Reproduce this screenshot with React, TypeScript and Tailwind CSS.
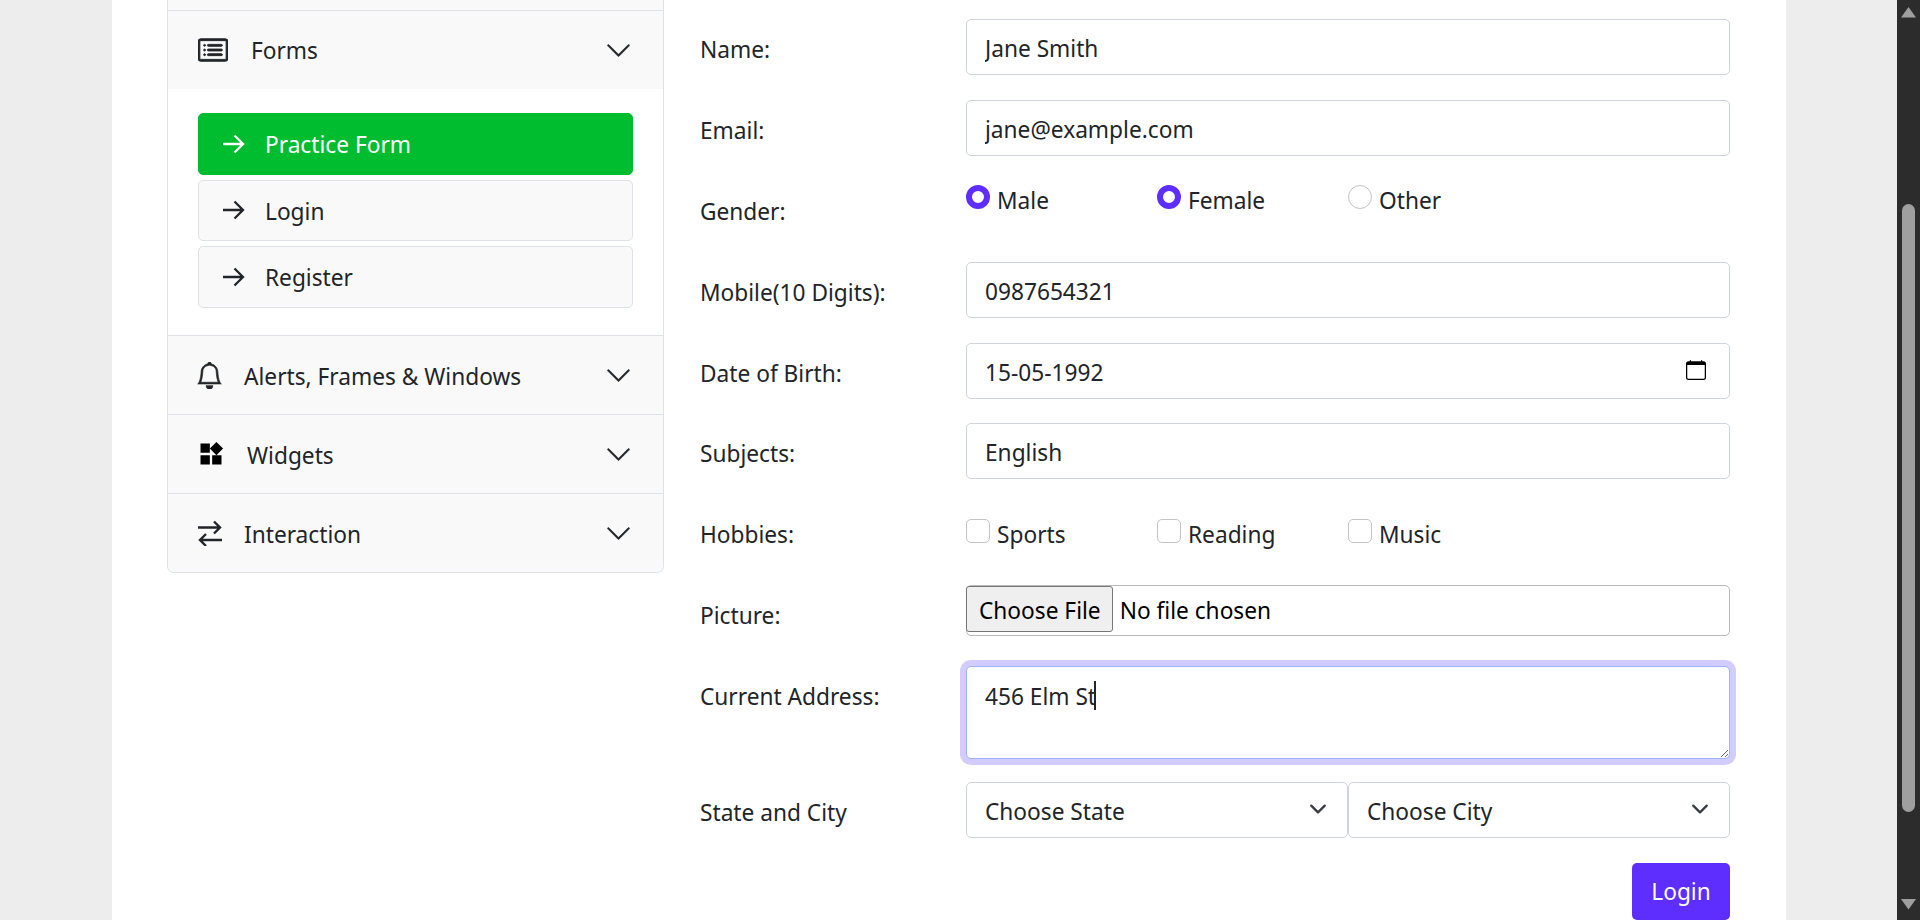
import React from 'react';
import { BsBell, BsCalendar, BsCardList, BsChevronDown } from 'react-icons/bs';
import { MdWidgets } from 'react-icons/md';

const inputClass =
  'w-full h-[56px] pl-[18px] pr-[19px] pt-[2px] bg-white border border-[#ced4da] rounded-[5px] text-[#212529] outline-none';

const Field: React.FC<{ label: string; labelTop?: string; className?: string; children: React.ReactNode }> = ({
  label,
  labelTop = 'pt-[14px]',
  className = 'mb-[25px]',
  children,
}) => (
  <div className={`flex ${className}`}>
    <label className={`w-[266px] shrink-0 ${labelTop}`}>{label}</label>
    <div className="flex-1 min-w-0">{children}</div>
  </div>
);

const Radio: React.FC<{ label: string; checked?: boolean }> = ({ label, checked }) => (
  <label className="flex w-[191px] items-start gap-[7px]">
    <input
      type="radio"
      readOnly
      checked={!!checked}
      className={`appearance-none w-[24px] h-[24px] mt-[4px] rounded-full ${
        checked ? 'border-[6px] border-[#5e2dff] bg-white' : 'border border-[#c4c4c4] bg-white'
      }`}
    />
    <span className="pt-[3px]">{label}</span>
  </label>
);

const Check: React.FC<{ label: string }> = ({ label }) => (
  <label className="flex w-[191px] items-start gap-[7px]">
    <input type="checkbox" readOnly className="appearance-none w-[24px] h-[24px] mt-[15px] rounded-[5px] border border-[#c4c4c4] bg-white" />
    <span className="pt-[14px]">{label}</span>
  </label>
);

const ArrowIcon = () => (
  <svg width="22" height="20" viewBox="0 0 22 20" fill="none" stroke="currentColor" strokeWidth="2.3" className="mr-[20px] shrink-0">
    <path d="M0 10H20M11.5 1.5 20 10l-8.500 8.500" />
  </svg>
);

const SubItem: React.FC<{ label: string; active?: boolean }> = ({ label, active }) => (
  <a
    className={`flex items-center h-[61.5px] pl-[24px] rounded-[5px] border ${
      active ? 'bg-[#00bd2f] border-[#00bd2f] text-white' : 'bg-[#f9f9f9] border-[#dee2e6]'
    }`}
  >
    <ArrowIcon />
    <span className="pt-[3px]">{label}</span>
  </a>
);

const SwapIcon = () => (
  <svg width="24" height="26" viewBox="0 0 24 26" fill="none" stroke="#212529" strokeWidth="2.4" className="shrink-0">
    <path d="M0 7.500H22M16 1.500l6 6-6 6" />
    <path d="M24 20H2M8 14l-6 6 6 6" />
  </svg>
);

const Section: React.FC<{ icon: React.ReactNode; label: string; gap: string }> = ({ icon, label, gap }) => (
  <div className="flex items-center h-[79px] pl-[30px] pr-[31px] bg-[#f9f9f9] border-t border-[#dee2e6]">
    {icon}
    <span className={`${gap} pt-[5px]`}>{label}</span>
    <BsChevronDown size={27} className="ml-auto stroke-[0.3px] stroke-current" />
  </div>
);

const Sidebar = () => (
  <aside className="w-[497px] shrink-0 self-start bg-white border-x border-b border-[#dee2e6] rounded-b-[7px] overflow-hidden">
    <div className="h-[10px] bg-[#f9f9f9]" />
    <div className="flex items-center h-[79px] pl-[30px] pr-[31px] bg-[#f9f9f9] border-t border-[#dee2e6]">
      <BsCardList size={30} className="stroke-[0.5px] stroke-current" />
      <span className="ml-[23px] pt-[2px]">Forms</span>
      <BsChevronDown size={27} className="ml-auto stroke-[0.3px] stroke-current" />
    </div>
    <div className="flex flex-col gap-[5px] pt-[24px] pb-[27.5px] px-[30px]">
      <SubItem label="Practice Form" active />
      <SubItem label="Login" />
      <SubItem label="Register" />
    </div>
    <Section icon={<BsBell size={27} className="-ml-[2px] stroke-[0.4px] stroke-current" />} label="Alerts, Frames & Windows" gap="ml-[21px]" />
    <Section icon={<MdWidgets size={28} className="text-black -ml-[1px]" />} label="Widgets" gap="ml-[22px]" />
    <Section icon={<SwapIcon />} label="Interaction" gap="ml-[22px]" />
  </aside>
);

const PracticeForm = () => (
  <form className="flex-1 min-w-0 pt-[19px]">
    <Field label="Name:">
      <input className={inputClass} readOnly value="Jane Smith" />
    </Field>
    <Field label="Email:">
      <input className={inputClass} readOnly value="jane@example.com" />
    </Field>
    <Field label="Gender:" labelTop="pt-[14px]">
      <div className="flex h-[56px]">
        <Radio label="Male" checked />
        <Radio label="Female" checked />
        <Radio label="Other" />
      </div>
    </Field>
    <Field label="Mobile(10 Digits):">
      <input className={inputClass} readOnly value="0987654321" />
    </Field>
    <Field label="Date of Birth:" className="mb-[24px]">
      <div className="relative">
        <input className={inputClass} readOnly value="15-05-1992" />
        <BsCalendar size={20} className="absolute right-[24px] top-[17px] text-black" />
      </div>
    </Field>
    <Field label="Subjects:">
      <input className={inputClass} readOnly value="English" />
    </Field>
    <Field label="Hobbies:" labelTop="pt-[14px]">
      <div className="flex h-[56px]">
        <Check label="Sports" />
        <Check label="Reading" />
        <Check label="Music" />
      </div>
    </Field>
    <Field label="Picture:" labelTop="pt-[14px]" className="mb-[30px]">
      <div className="h-[51px] bg-white border border-[#b9b9b9] rounded-[5px] flex items-center">
        <span className="flex items-center h-[46px] -ml-px -mt-[3px] pl-[12px] pr-[11px] pt-[4px] bg-[#efefef] border border-[#767676] rounded-[3px] text-black">
          Choose File
        </span>
        <span className="ml-[7px] pt-[1px] text-black">No file chosen</span>
      </div>
    </Field>
    <Field label="Current Address:" className="mb-[23px]">
      <div className="relative">
        <textarea
          readOnly
          value="456 Elm St"
          className="block w-full h-[93px] pl-[18px] pr-[19px] py-[13px] bg-white border border-[#9db2fa] rounded-[5px] text-[#212529] outline-none ring-[6px] ring-[#d3ccff]"
        />
        <span className="absolute left-[128px] top-[15px] w-[2px] h-[29px] bg-[#212529]" />
      </div>
    </Field>
    <Field label="State and City" className="mb-[25px]">
      <div className="flex">
        <div className="relative w-[382px]">
          <input className={inputClass} readOnly value="Choose State" />
          <BsChevronDown size={18} className="absolute right-[21px] top-[18px] stroke-1 stroke-[#343a40]" />
        </div>
        <div className="relative flex-1">
          <input className={inputClass} readOnly value="Choose City" />
          <BsChevronDown size={18} className="absolute right-[21px] top-[18px] stroke-1 stroke-[#343a40]" />
        </div>
      </div>
    </Field>
    <div className="flex justify-end">
      <button type="button" className="h-[57px] w-[98px] pt-[2px] bg-[#5e2dff] text-white rounded-[5px]">
        Login
      </button>
    </div>
  </form>
);

const Scrollbar = () => (
  <div className="w-[23px] shrink-0 bg-[#2c2c2c] flex flex-col items-center">
    <svg width="15" height="11" viewBox="0 0 15 11" className="mt-[7px] fill-[#9f9f9f]">
      <path d="M7.5 0 15 10.5H0z" />
    </svg>
    <div className="w-[13px] h-[608px] mt-[186px] rounded-full bg-[#9f9f9f]" />
    <svg width="15" height="11" viewBox="0 0 15 11" className="mt-[87px] fill-[#9f9f9f]">
      <path d="M0 0H15L7.5 10.5z" />
    </svg>
  </div>
);

export default function App() {
  return (
    <div className="flex h-[920px] overflow-hidden bg-[#ededed] text-[22.7px] text-[#212529] font-['Noto_Sans',sans-serif]">
      <div className="flex-1 min-w-0 pl-[112px] pr-[111px]">
        <main className="flex h-full bg-white pl-[55px] pr-[56px]">
          <Sidebar />
          <div className="w-[36px] shrink-0" />
          <PracticeForm />
        </main>
      </div>
      <Scrollbar />
    </div>
  );
}
